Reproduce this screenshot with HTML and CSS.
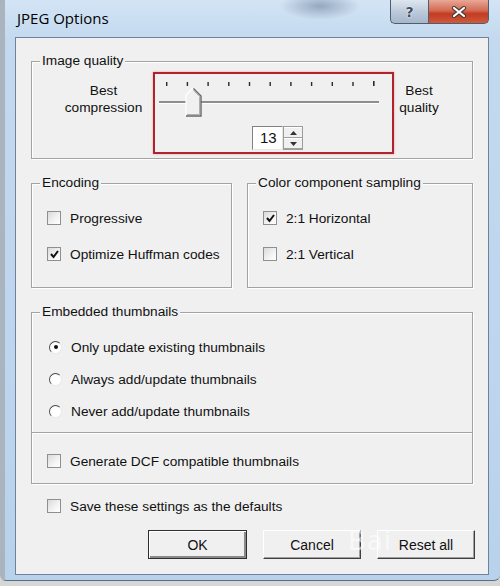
FILE: index.html
```html
<!DOCTYPE html>
<html lang="en">
<head>
    <meta charset="UTF-8">
    <title>JPEG Options</title>
    <link rel="stylesheet" href="styles.css">
</head>
<body>
    <div class="window">
        <div class="titlebar">
            <span class="title">JPEG Options</span>
            <div class="caption-buttons">
                <div class="cap-btn help">?</div>
                <div class="cap-btn close">
                    <svg width="16" height="12" viewBox="0 0 16 12">
                        <path d="M3 2 L13 10 M13 2 L3 10" stroke="#4a3a36" stroke-width="4.2" stroke-linecap="round"/>
                        <path d="M3 2 L13 10 M13 2 L3 10" stroke="#fff" stroke-width="2.2" stroke-linecap="round"/>
                    </svg>
                </div>
            </div>
        </div>

        <div class="client">
            <div class="group quality">
                <span class="legend">Image quality</span>
                <div class="quality-row">
                    <div class="end-label left">Best<br>compression</div>
                    <div class="highlight">
                        <svg class="slider" width="237" height="50" viewBox="0 0 237 50">
                            <g fill="#2a2a2a">
                                <rect x="11" y="8" width="1.4" height="4"/>
                                <rect x="31.7" y="8" width="1.4" height="4"/>
                                <rect x="52.4" y="8" width="1.4" height="4"/>
                                <rect x="73.1" y="8" width="1.4" height="4"/>
                                <rect x="93.8" y="8" width="1.4" height="4"/>
                                <rect x="114.5" y="8" width="1.4" height="4"/>
                                <rect x="135.2" y="8" width="1.4" height="4"/>
                                <rect x="155.9" y="8" width="1.4" height="4"/>
                                <rect x="176.6" y="8" width="1.4" height="4"/>
                                <rect x="197.3" y="8" width="1.4" height="4"/>
                                <rect x="218" y="7" width="1.6" height="5"/>
                            </g>
                            <rect x="4" y="27" width="220" height="2" fill="#8e8e8e"/>
                            <rect x="4" y="29" width="220" height="1" fill="#fff"/>
                            <polygon points="31,21 38,14 46,22 46,42 31,42" fill="#f0f0f0"/>
                            <polyline points="31,42 31,21 38,14" fill="none" stroke="#fff" stroke-width="1.2"/>
                            <polyline points="38.5,14.5 46,22 46,42 31,42" fill="none" stroke="#666" stroke-width="1.4"/>
                            <polyline points="38.5,16.5 44.5,22.5 44.5,40.5 32,40.5" fill="none" stroke="#b0b0b0" stroke-width="1"/>
                        </svg>
                        <div class="spinner">
                            <div class="spin-edit">13</div>
                            <div class="spin-btns">
                                <div class="spin-half">
                                    <svg width="7" height="4" viewBox="0 0 7 4"><polygon points="0,4 3.5,0 7,4" fill="#333"/></svg>
                                </div>
                                <div class="spin-half">
                                    <svg width="7" height="4" viewBox="0 0 7 4"><polygon points="0,0 3.5,4 7,0" fill="#333"/></svg>
                                </div>
                            </div>
                        </div>
                    </div>
                    <div class="end-label right">Best<br>quality</div>
                </div>
            </div>

            <div class="group-row">
                <div class="group encoding">
                    <span class="legend">Encoding</span>
                    <div class="options">
                        <div class="check-row"><span class="box"></span>Progressive</div>
                        <div class="check-row"><span class="box checked"><svg width="11" height="11" viewBox="0 0 11 11"><polyline points="2,5 4.5,8 9,2" fill="none" stroke="#111" stroke-width="2"/></svg></span>Optimize Huffman codes</div>
                    </div>
                </div>
                <div class="group sampling">
                    <span class="legend">Color component sampling</span>
                    <div class="options">
                        <div class="check-row"><span class="box checked"><svg width="11" height="11" viewBox="0 0 11 11"><polyline points="2,5 4.5,8 9,2" fill="none" stroke="#111" stroke-width="2"/></svg></span>2:1 Horizontal</div>
                        <div class="check-row"><span class="box"></span>2:1 Vertical</div>
                    </div>
                </div>
            </div>

            <div class="group thumbnails">
                <span class="legend">Embedded thumbnails</span>
                <div class="radios">
                    <div class="check-row"><span class="radio on"></span>Only update existing thumbnails</div>
                    <div class="check-row"><span class="radio"></span>Always add/update thumbnails</div>
                    <div class="check-row"><span class="radio"></span>Never add/update thumbnails</div>
                </div>
                <div class="sub">
                    <div class="check-row"><span class="box"></span>Generate DCF compatible thumbnails</div>
                </div>
            </div>

            <div class="check-row save"><span class="box"></span>Save these settings as the defaults</div>

            <div class="actions">
                <button class="btn default">OK</button>
                <button class="btn">Cancel</button>
                <button class="btn">Reset all</button>
            </div>
            <div class="watermark">Bai</div>
        </div>
    </div>
</body>
</html>
```

FILE: styles.css
```css
body {
    margin: 0;
    background: #d6d6d6;
    font-family: 'Liberation Sans', Arial, sans-serif;
    font-size: 13.7px;
    color: #111;
}
.window {
    width: 500px;
    height: 581px;
    box-sizing: border-box;
    border-left: 5px solid #aab4bf;
    border-bottom: 1px solid #5a6c80;
    border-radius: 0 0 6px 6px;
    background:
        radial-gradient(ellipse 40px 14px at 315px 6px, rgba(90, 110, 135, 0.5), rgba(90, 110, 135, 0)),
        linear-gradient(180deg, #d3e4f5 0%, #c3d9ef 40px, #b9d2ec 100%);
    display: flex;
    flex-direction: column;
}
.titlebar {
    height: 37px;
    display: flex;
    align-items: flex-start;
}
.title {
    font-family: 'Open Sans', sans-serif;
    font-size: 15px;
    line-height: 20px;
    margin: 8px 0 0 12px;
    color: #000;
}
.caption-buttons {
    margin-left: auto;
    margin-right: 11px;
    display: flex;
}
.cap-btn {
    height: 24px;
    box-sizing: border-box;
    border: 1px solid #4f5d6c;
    border-top: none;
    display: flex;
    align-items: center;
    justify-content: center;
}
.help {
    width: 38px;
    border-right: none;
    border-radius: 0 0 0 5px;
    background: linear-gradient(180deg, #dde6ef, #bccadb 50%, #a5b7ca);
    font-family: 'DejaVu Sans', sans-serif;
    font-weight: bold;
    font-size: 14px;
    color: #3c4e63;
    text-shadow: 0 0 2px #fff, 0 0 1px #fff;
}
.close {
    width: 61px;
    border-radius: 0 0 5px 0;
    background: linear-gradient(180deg, #e9a898, #d46c55 45%, #c23b20 60%, #cf5a3e);
}
.client {
    height: 538px;
    margin: 0 11px 0 10px;
    box-sizing: border-box;
    background: #f0f0f0;
    border: 1px solid #6f8299;
    padding: 0 15px;
    position: relative;
}
.group {
    border: 1px solid #a3a3a3;
    box-shadow: 1px 1px 0 #fff, inset 1px 1px 0 #fff;
    box-sizing: border-box;
}
.legend {
    display: table;
    margin: -9px 0 0 8px;
    padding: 0 2px;
    line-height: 16px;
    background: #f0f0f0;
}
.quality {
    margin-top: 23px;
    padding-bottom: 4px;
}
.quality-row {
    display: flex;
    margin-top: 3px;
}
.end-label {
    margin-top: 10px;
    line-height: 17px;
    text-align: center;
}
.end-label.left {
    width: 99px;
    padding-left: 22px;
}
.end-label.right {
    width: 44px;
    margin-left: 3px;
}
.highlight {
    width: 241px;
    height: 82px;
    box-sizing: border-box;
    border: 2px solid #b0232c;
    box-shadow: 0 0 2px rgba(225, 90, 90, 0.6);
}
.slider {
    display: block;
}
.spinner {
    display: flex;
    height: 24px;
    margin: 2px 0 0 97px;
}
.spin-edit {
    width: 31px;
    box-sizing: border-box;
    background: #fff;
    border: 1px solid;
    border-color: #828282 #e6e6e6 #e6e6e6 #828282;
    padding-left: 7px;
    font-size: 15px;
    line-height: 22px;
}
.spin-btns {
    width: 20px;
    box-sizing: border-box;
    border: 1px solid #9c9c9c;
    display: flex;
    flex-direction: column;
}
.spin-half {
    flex: 1;
    display: flex;
    align-items: center;
    justify-content: center;
    border-top: 1px solid #fff;
    border-bottom: 1px solid #a0a0a0;
}
.group-row {
    display: flex;
    gap: 15px;
    margin-top: 24px;
}
.encoding {
    width: 201px;
    height: 105px;
}
.sampling {
    width: 226px;
    height: 105px;
}
.options {
    margin-top: 17px;
    padding-left: 15px;
    display: flex;
    flex-direction: column;
    gap: 16px;
}
.check-row {
    display: flex;
    align-items: center;
    height: 20px;
    white-space: nowrap;
}
.box {
    width: 14px;
    height: 14px;
    box-sizing: border-box;
    border: 1px solid #8e8f8f;
    background: linear-gradient(135deg, #dadada, #f4f4f4 60%, #fff);
    margin-right: 9px;
    display: flex;
    align-items: center;
    justify-content: center;
    flex-shrink: 0;
}
.radio {
    width: 13px;
    height: 13px;
    box-sizing: border-box;
    border-radius: 50%;
    border: 1.5px solid;
    border-color: #4a4a4a #e8e8e8 #e8e8e8 #4a4a4a;
    background: #fff;
    margin: 0 9px 0 1px;
    display: flex;
    align-items: center;
    justify-content: center;
    flex-shrink: 0;
}
.radio.on::after {
    content: '';
    width: 4px;
    height: 4px;
    border-radius: 50%;
    background: #111;
}
.thumbnails {
    margin-top: 24px;
    height: 172px;
}
.radios {
    margin-top: 17px;
    padding-left: 16px;
    display: flex;
    flex-direction: column;
    gap: 12px;
}
.sub {
    margin-top: 11px;
    border-top: 1px solid #a3a3a3;
    box-shadow: inset 0 1px 0 #fff;
    padding: 18px 0 0 15px;
}
.save {
    margin: 12px 0 0 16px;
}
.actions {
    display: flex;
    justify-content: flex-end;
    gap: 16px;
    margin: 14px -2px 0 0;
}
.btn {
    width: 98px;
    height: 29px;
    box-sizing: border-box;
    background: #f0f0f0;
    border: 1px solid;
    border-color: #fff #3f3f3f #3f3f3f #fff;
    box-shadow: inset -1px -1px 0 #a0a0a0;
    font-family: 'Liberation Sans', Arial, sans-serif;
    font-size: 14px;
    color: #111;
    padding: 0;
}
.btn.default {
    width: 99px;
    border-color: #2e2e2e;
    box-shadow: inset 1px 1px 0 #fff, inset -2px -2px 0 #8a8a8a;
}
.watermark {
    position: absolute;
    left: 332px;
    top: 488px;
    font-family: 'DejaVu Sans', sans-serif;
    font-size: 26px;
    color: rgba(255, 255, 255, 0.6);
    letter-spacing: 1px;
}
```
